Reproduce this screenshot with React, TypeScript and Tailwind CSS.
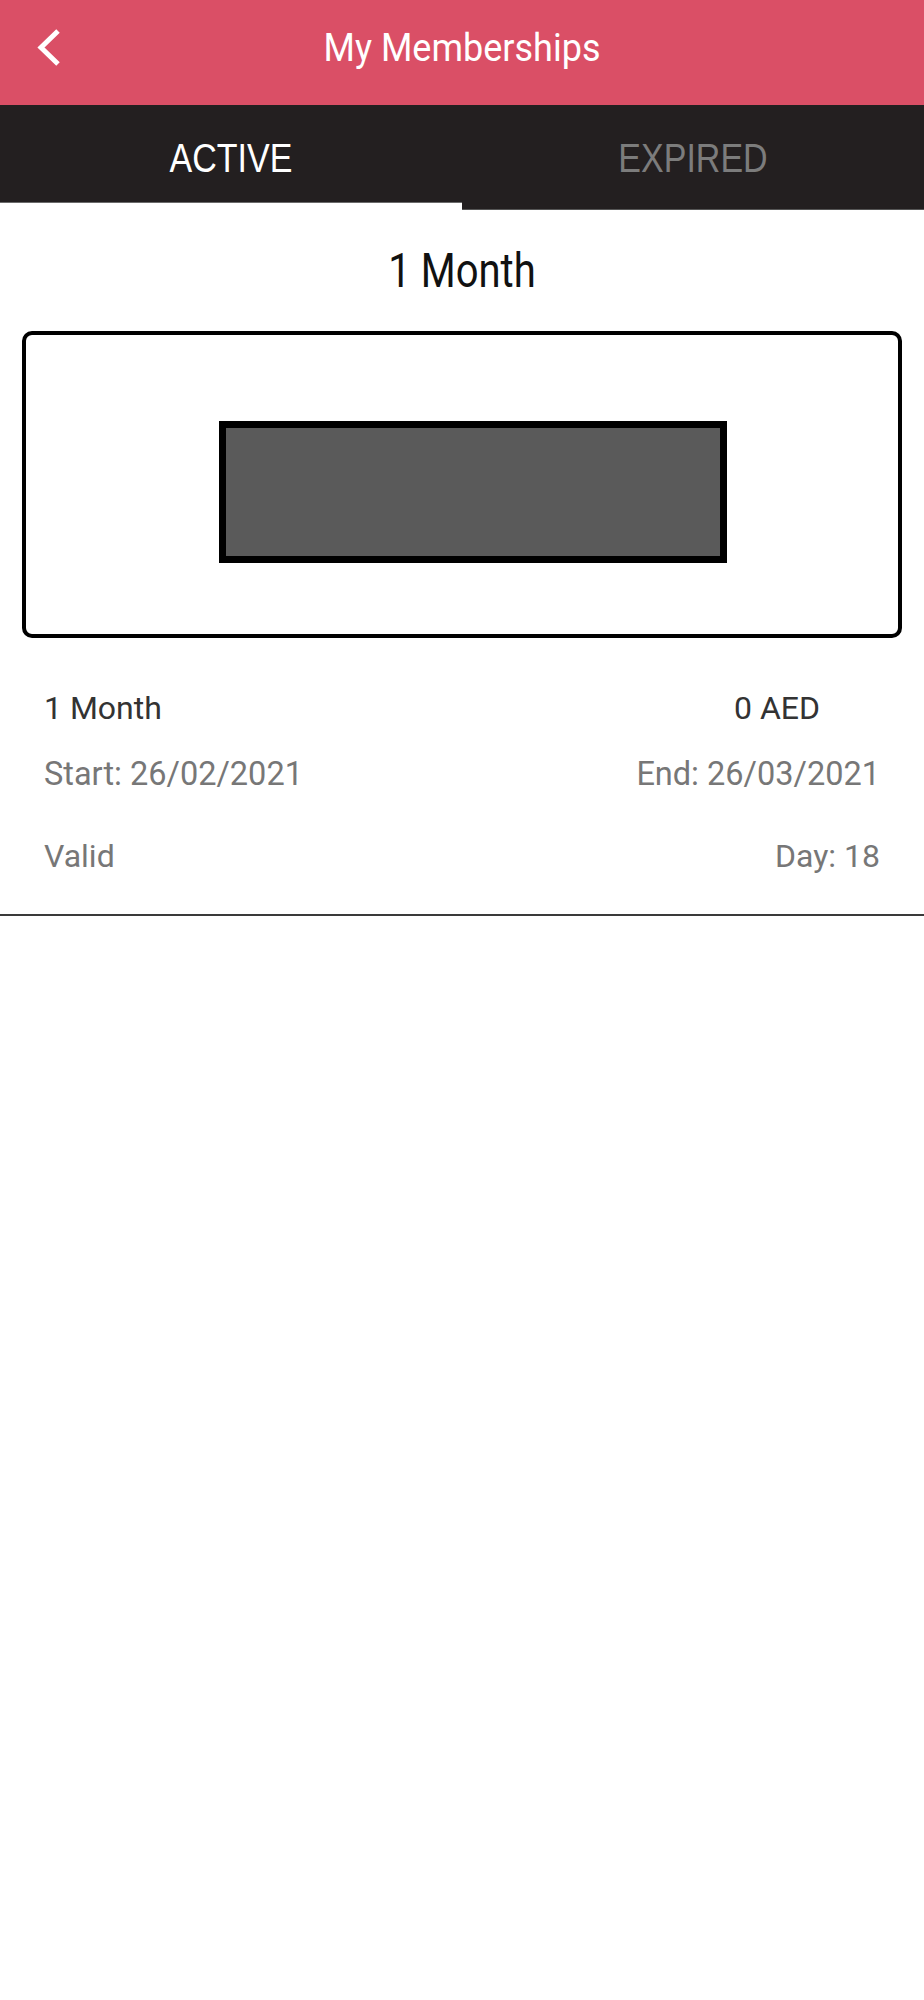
import React from "react";

export default function App() {
  return (
    <div className="min-h-[2000px] w-full bg-white" style={{ fontFamily: "Roboto, 'Liberation Sans', sans-serif" }}>
      {/* Header */}
      <div className="grid h-[105px] grid-cols-[1fr_auto_1fr] items-center bg-[#da4f66] pb-[10px]">
        <div className="flex items-center pl-[36px]">
          <svg width="26" height="40" viewBox="0 0 26 40" fill="none">
            <polyline points="22,3 5,19.5 22,36" stroke="#ffffff" strokeWidth="5" strokeLinecap="butt" strokeLinejoin="miter" />
          </svg>
        </div>
        <div className="inline-block scale-y-[1.1] font-['Roboto'] text-[36px] leading-[42px] font-normal text-white">
          My Memberships
        </div>
        <div />
      </div>

      {/* Tabs */}
      <div className="relative grid h-[105px] grid-cols-2 bg-[#231f20]">
        <div className="relative flex items-center justify-center">
          <span className="inline-block scale-y-[1.2] font-['Liberation_Sans'] text-[34px] leading-[40px] text-white">ACTIVE</span>
          <div className="absolute bottom-0 left-0 h-[8px] w-full border-t border-[#6b6b6b] bg-white" />
        </div>
        <div className="relative flex items-center justify-center">
          <span className="inline-block scale-y-[1.2] font-['Liberation_Sans'] text-[34px] leading-[40px] text-[#7c7c7c]">EXPIRED</span>
          <div className="absolute bottom-0 left-0 h-[1px] w-full bg-[#555555]" />
        </div>
      </div>

      {/* Heading */}
      <div className="mt-[37px] flex justify-center">
        <span className="inline-block scale-y-[1.2] font-['Roboto'] text-[40px] leading-[48px] text-[#111111]">1 Month</span>
      </div>

      {/* Card */}
      <div className="mx-[22px] mt-[36px] h-[307px] rounded-[10px] border-[4px] border-black bg-white">
        <div className="flex justify-center pl-[22px] pt-[86px]">
          <div className="h-[142px] w-[508px] border-[7px] border-black bg-[#5a5a5a]" />
        </div>
      </div>

      {/* Details */}
      <div className="px-[44px] pt-[51px] font-['Roboto'] text-[32px] leading-[38px]">
        <div className="flex justify-between text-[#333333]">
          <span>1 Month</span>
          <span className="mr-[60px]">0 AED</span>
        </div>
        <div className="mt-[28px] flex justify-between text-[#777777]">
          <span className="text-[32.5px]">Start: 26/02/2021</span>
          <span className="text-[32.5px]">End: 26/03/2021</span>
        </div>
        <div className="mt-[44px] flex justify-between text-[#777777]">
          <span>Valid</span>
          <span>Day: 18</span>
        </div>
      </div>
      <div className="mt-[39px] h-[2px] w-full bg-[#3a3a3a]" />
    </div>
  );
}
